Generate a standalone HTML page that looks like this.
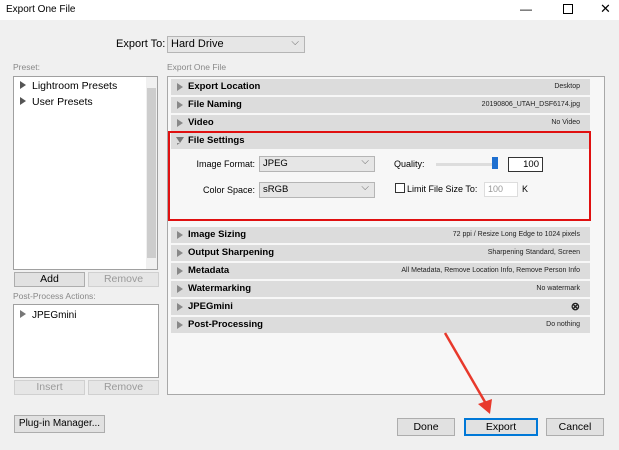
<!DOCTYPE html>
<html><head><style>
*{box-sizing:border-box;margin:0;padding:0}
body{width:619px;height:450px;background:#f0f0f0;font-family:"Liberation Sans",sans-serif;font-size:11px;color:#000;position:relative;overflow:hidden}
.a{position:absolute}
.btn{position:absolute;background:#e1e1e1;border:1px solid #adadad;text-align:center;font-size:10.5px}
.dis{color:#9a9a9a;background:#e6e6e6;border-color:#d0d0d0}
.row{position:absolute;left:171px;width:419px;height:16px;background:#dcdcdc;font-weight:bold;font-size:9.5px;line-height:16px;padding-left:17px}
.row:before{content:"";position:absolute;left:6px;top:4px;border-left:6px solid #888;border-top:4px solid transparent;border-bottom:4px solid transparent}
.row span{position:absolute;right:10px;top:0;font-weight:normal;font-size:7px;color:#222}
.sel{position:absolute;background:#e6e6e6;border:1px solid #b5b5b5;font-size:9.5px;line-height:14px;padding-left:3px}
.sel:after{content:"⌵";position:absolute;right:5px;top:-2px;color:#666;font-size:10px}
.tri{display:inline-block;border-left:6px solid #555;border-top:4px solid transparent;border-bottom:4px solid transparent;margin-right:6px}
.lbl{position:absolute;text-align:right;font-size:9px;width:100px}
</style></head><body>
<div class="a" style="left:0;top:0;width:619px;height:20px;background:#fff"></div>
<div class="a" style="left:6px;top:4px;font-size:10px">Export One File</div>
<div class="a" style="left:520px;top:2px;font-size:12px">—</div>
<div class="a" style="left:563px;top:1px;width:10px;height:10px;border:1px solid #000;margin-top:3px"></div>
<div class="a" style="left:600px;top:1px;font-size:13px">✕</div>

<div class="a" style="left:116px;top:38px;font-size:11px">Export To:</div>
<div class="sel" style="left:167px;top:36px;width:138px;height:17px;line-height:15px;font-size:11px">Hard Drive</div>

<div class="a" style="left:13px;top:62px;font-size:8.5px;color:#888">Preset:</div>
<div class="a" style="left:13px;top:76px;width:145px;height:194px;background:#fff;border:1px solid #a0a0a0"></div>
<div class="a" style="left:146px;top:77px;width:11px;height:192px;background:#f0f0f0"></div>
<div class="a" style="left:147px;top:88px;width:9px;height:170px;background:#cdcdcd"></div>
<div class="a" style="left:20px;top:80px;font-size:10.5px"><span class="tri"></span>Lightroom Presets</div>
<div class="a" style="left:20px;top:96px;font-size:10.5px"><span class="tri"></span>User Presets</div>
<div class="btn" style="left:14px;top:272px;width:71px;height:15px">Add</div>
<div class="btn dis" style="left:88px;top:272px;width:71px;height:15px">Remove</div>
<div class="a" style="left:13px;top:291px;font-size:8.5px;color:#888">Post-Process Actions:</div>
<div class="a" style="left:13px;top:304px;width:146px;height:74px;background:#fff;border:1px solid #a0a0a0"></div>
<div class="a" style="left:20px;top:310px;font-size:10px"><span class="tri" style="border-left-color:#777"></span>JPEGmini</div>
<div class="btn dis" style="left:14px;top:380px;width:71px;height:15px">Insert</div>
<div class="btn dis" style="left:88px;top:380px;width:71px;height:15px">Remove</div>
<div class="btn" style="left:14px;top:415px;width:91px;height:18px;line-height:16px;font-size:10px">Plug-in Manager...</div>

<div class="a" style="left:167px;top:62px;font-size:8.5px;color:#888">Export One File</div>
<div class="a" style="left:167px;top:76px;width:438px;height:319px;background:#f7f7f7;border:1px solid #a8a8a8"></div>
<div class="row" style="top:79px">Export Location<span>Desktop</span></div>
<div class="row" style="top:97px">File Naming<span>20190806_UTAH_DSF6174.jpg</span></div>
<div class="row" style="top:115px">Video<span>No Video</span></div>
<div class="row" style="top:133px">File Settings</div>
<div class="a" style="left:176px;top:137px;border-top:6px solid #777;border-left:4px solid transparent;border-right:4px solid transparent;background:#dcdcdc;z-index:2"></div>
<div class="a" style="left:168px;top:131px;width:423px;height:90px;border:2px solid #e01010"></div>
<div class="lbl" style="left:155px;top:159px">Image Format:</div>
<div class="sel" style="left:259px;top:156px;width:116px;height:16px">JPEG</div>
<div class="lbl" style="left:155px;top:185px">Color Space:</div>
<div class="sel" style="left:259px;top:182px;width:116px;height:16px">sRGB</div>
<div class="a" style="left:394px;top:159px;font-size:9px">Quality:</div>
<div class="a" style="left:436px;top:163px;width:60px;height:3px;background:#ddd"></div>
<div class="a" style="left:492px;top:157px;width:6px;height:12px;background:#1e6fd0"></div>
<div class="a" style="left:508px;top:157px;width:35px;height:15px;background:#fff;border:1px solid #333;text-align:right;padding-right:3px;font-size:9.5px;line-height:13px">100</div>
<div class="a" style="left:395px;top:183px;width:10px;height:10px;border:1px solid #333;background:#fff"></div>
<div class="a" style="left:407px;top:184px;font-size:9px">Limit File Size To:</div>
<div class="a" style="left:484px;top:182px;width:34px;height:15px;background:#fff;border:1px solid #ddd;color:#999;font-size:9px;padding-left:3px;line-height:13px">100</div>
<div class="a" style="left:522px;top:184px;font-size:9px">K</div>
<div class="row" style="top:227px">Image Sizing<span>72 ppi / Resize Long Edge to 1024 pixels</span></div>
<div class="row" style="top:245px">Output Sharpening<span>Sharpening Standard, Screen</span></div>
<div class="row" style="top:263px">Metadata<span>All Metadata, Remove Location Info, Remove Person Info</span></div>
<div class="row" style="top:281px">Watermarking<span>No watermark</span></div>
<div class="row" style="top:299px">JPEGmini<span style="font-size:11px;font-weight:bold">⊗</span></div>
<div class="row" style="top:317px">Post-Processing<span>Do nothing</span></div>

<div class="btn" style="left:397px;top:418px;width:58px;height:18px;line-height:16px">Done</div>
<div class="btn" style="left:464px;top:418px;width:74px;height:18px;border:2px solid #0078d7;line-height:14px">Export</div>
<div class="btn" style="left:546px;top:418px;width:58px;height:18px;line-height:16px">Cancel</div>
<svg class="a" style="left:0;top:0" width="619" height="450"><line x1="445" y1="333" x2="485" y2="402" stroke="#e8392c" stroke-width="2.5"/><polygon points="478,404 492,399 490,414" fill="#e8392c"/></svg>
</body></html>
